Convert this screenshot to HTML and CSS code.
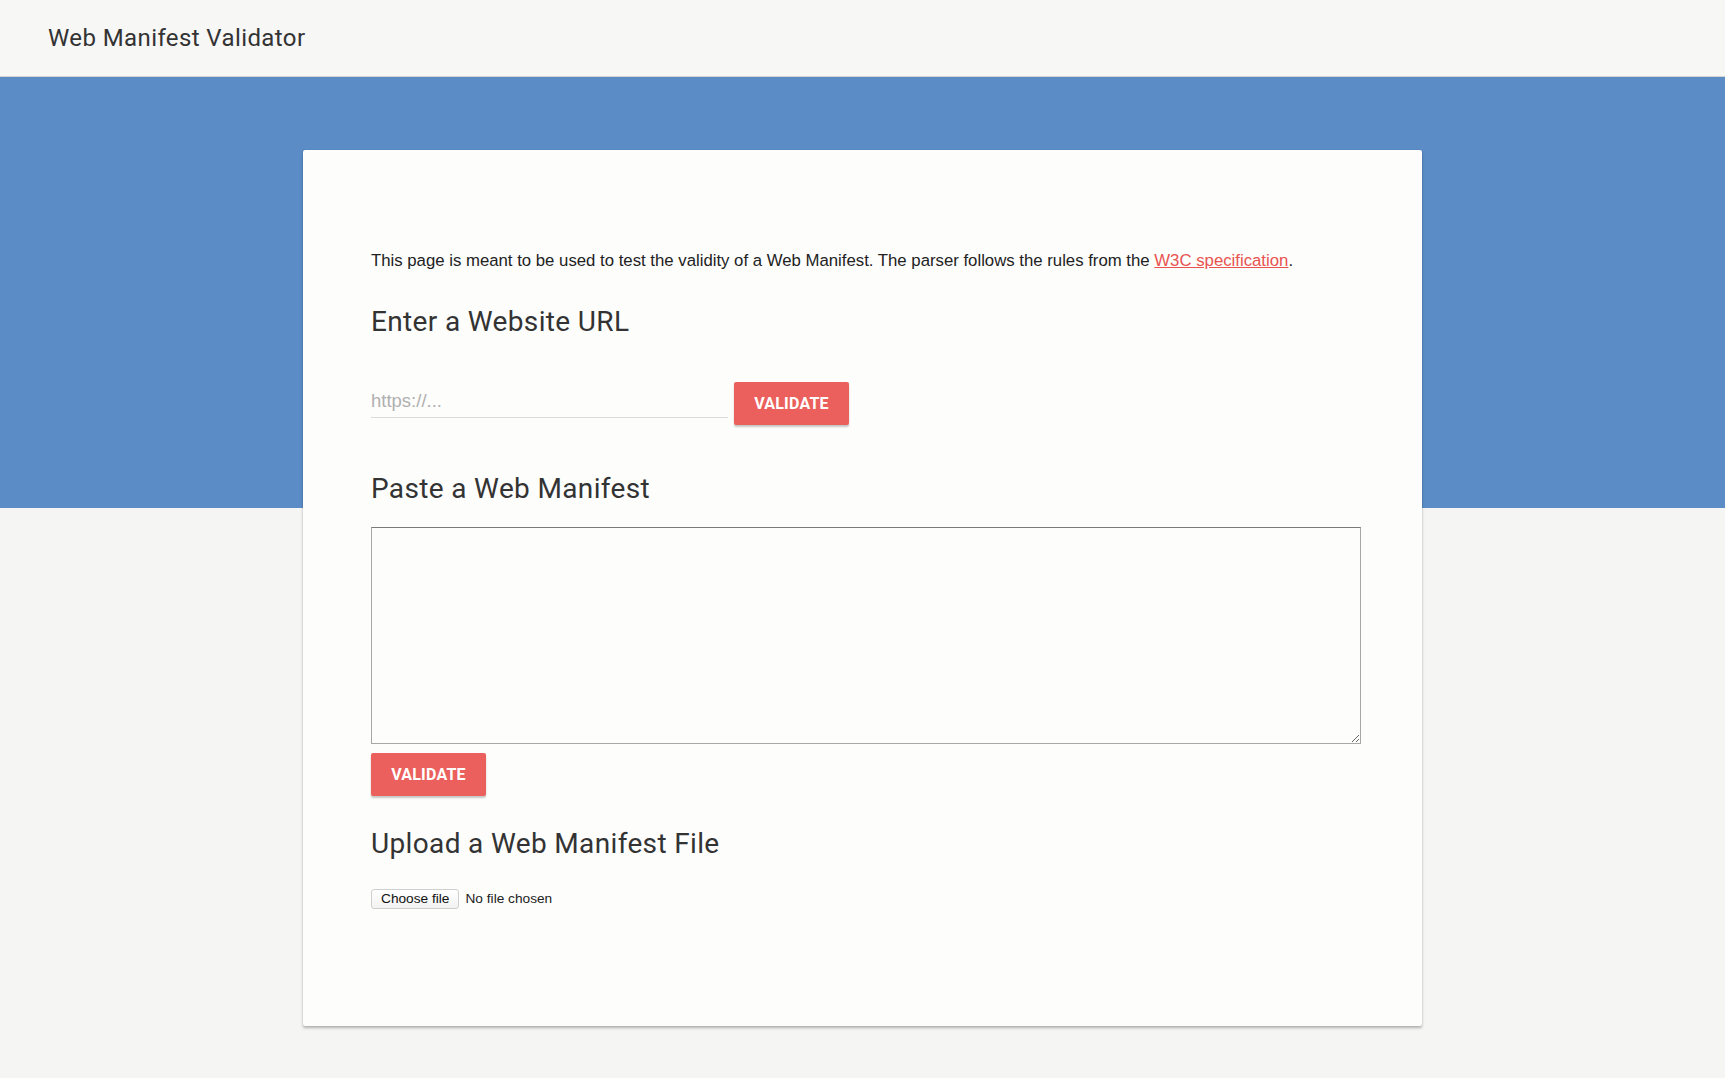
FILE: index.html
```html
<!DOCTYPE html>
<html lang="en">
<head>
<meta charset="utf-8">
<title>Web Manifest Validator</title>
<link rel="stylesheet" href="styles.css">
</head>
<body>
<header class="topbar">
  <h1 class="app-title">Web Manifest Validator</h1>
</header>
<main class="stage">
  <section class="card">
    <p class="intro">This page is meant to be used to test the validity of a Web Manifest. The parser follows the rules from the <a href="#" class="spec-link">W3C specification</a>.</p>

    <h2 class="section-title first">Enter a Website URL</h2>
    <div class="url-row">
      <input class="url-input" type="text" placeholder="https://...">
      <button class="btn" type="button">VALIDATE</button>
    </div>

    <h2 class="section-title paste">Paste a Web Manifest</h2>
    <textarea class="manifest-text"></textarea>
    <div class="btn-row">
      <button class="btn" type="button">VALIDATE</button>
    </div>

    <h2 class="section-title upload">Upload a Web Manifest File</h2>
    <div class="file-row">
      <span class="file-btn">Choose file</span>
      <span class="file-status">No file chosen</span>
    </div>
  </section>
</main>
</body>
</html>
```
FILE: styles.css
```css
html, body {
  margin: 0;
  padding: 0;
}
body {
  background: #f5f5f4;
  font-family: "Liberation Sans", Arial, sans-serif;
  color: #333;
  min-height: 1078px;
}
.topbar {
  height: 76px;
  background: #f7f7f6;
  border-bottom: 1px solid #d4d4d4;
  padding-left: 48px;
}
.app-title {
  margin: 0;
  font-family: Roboto, sans-serif;
  font-weight: 400;
  font-size: 24px;
  line-height: 76px;
  color: #333;
  letter-spacing: 0.4px;
}
.stage {
  background: linear-gradient(#5b8cc6 0, #5b8cc6 431px, transparent 431px);
  padding-top: 73px;
  padding-bottom: 51px;
}
.card {
  width: 1119px;
  box-sizing: border-box;
  margin: 0 auto;
  background: #fdfdfc;
  border-radius: 2px;
  box-shadow: 0 2px 3px rgba(0,0,0,0.28), 0 0 1px rgba(0,0,0,0.12);
  padding: 99px 61px 117px 68px;
}
.intro {
  margin: 0;
  font-size: 16.75px;
  line-height: 24px;
  color: #222;
}
.spec-link {
  color: #e8534f;
  text-decoration: underline;
}
.section-title {
  margin: 0;
  font-family: Roboto, sans-serif;
  font-weight: 400;
  font-size: 28px;
  line-height: 33.6px;
  color: #333;
  letter-spacing: 0.35px;
}
.section-title.first { margin-top: 32px; }
.section-title.paste { margin-top: 47px; }
.section-title.upload { margin-top: 31px; }
.url-row {
  display: flex;
  align-items: flex-start;
  margin-top: 43px;
}
.url-input {
  width: 357px;
  height: 36px;
  box-sizing: border-box;
  border: 0;
  border-bottom: 1px solid #dcdcdc;
  background: transparent;
  padding: 5px 0 2px;
  margin: 0 6px 0 0;
  font-family: "Liberation Sans", Arial, sans-serif;
  font-size: 18.5px;
  color: #333;
  outline: none;
}
.url-input::placeholder {
  color: #b0b0b0;
}
.btn {
  width: 115px;
  height: 43px;
  border: 0;
  border-radius: 2px;
  background: #eb605c;
  color: #fff;
  font-family: Roboto, sans-serif;
  font-weight: 700;
  font-size: 16px;
  letter-spacing: 0.2px;
  box-shadow: 0 2px 2px rgba(0,0,0,0.22);
  padding: 0;
  cursor: pointer;
}
.manifest-text {
  display: block;
  width: 990px;
  height: 217px;
  box-sizing: border-box;
  margin: 22px 0 0;
  border: 1px solid #a8a8a8;
  border-top-color: #7a7a7a;
  background: #fdfdfc;
  padding: 2px;
  font-family: "Liberation Mono", monospace;
  resize: both;
}
.btn-row {
  margin-top: 9px;
  display: flex;
}
.file-row {
  display: flex;
  align-items: center;
  margin-top: 28px;
  font-size: 13.7px;
  color: #222;
}
.file-btn {
  display: inline-block;
  height: 20px;
  box-sizing: border-box;
  border: 1px solid #cfcfcf;
  border-radius: 3px;
  background: linear-gradient(#ffffff, #f2f2f2);
  padding: 0 9px;
  line-height: 18px;
  font-size: 13.7px;
  color: #111;
  margin-right: 6px;
}
.file-status {
  line-height: 20px;
}
```
